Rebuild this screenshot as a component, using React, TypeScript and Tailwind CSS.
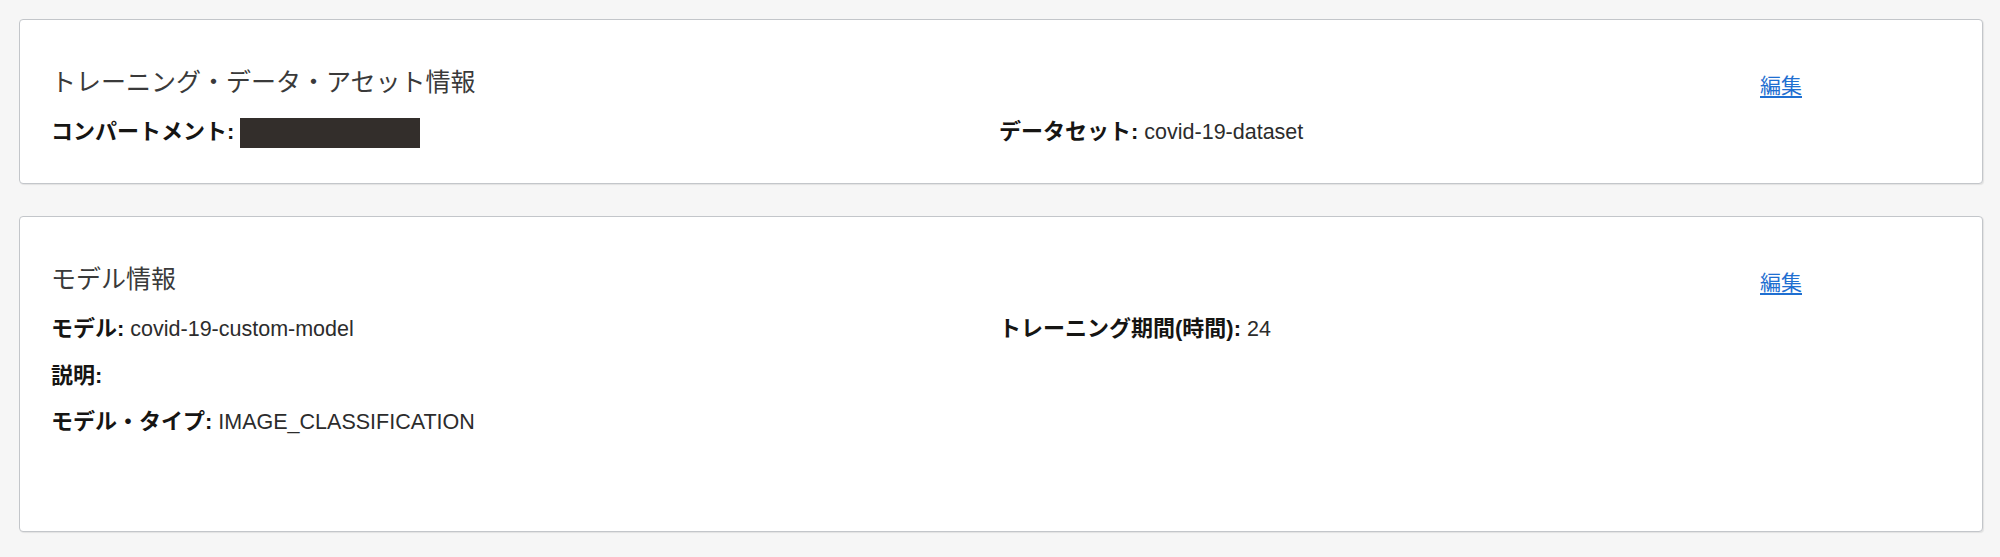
import React from "react";

const FONT = { fontFamily: '"Liberation Sans", "Noto Sans CJK JP", sans-serif' };

function Row({ label, children }: { label: string; children?: React.ReactNode }) {
  return (
    <div className="h-[30px] leading-[30px] whitespace-nowrap">
      <span className="font-bold text-[22px] text-[#161513]">{label}:</span>
      {children ? <span className="text-[21.5px] text-[#2c2c2c]"> {children}</span> : null}
    </div>
  );
}

function EditLink() {
  return (
    <a
      href="#"
      className="block pt-[8px] leading-[22px] text-[21px] text-[#1f6fd1] underline underline-offset-[3px] whitespace-nowrap"
    >
      編集
    </a>
  );
}

export default function App() {
  return (
    <div className="min-h-screen bg-[#f6f6f6] pt-[19px] pb-[24px]" style={FONT}>
      <div className="ml-[19px] mr-[17px] flex flex-col gap-[32px]">
        {/* Card 1 */}
        <div className="bg-white border border-[#c3c6ca] rounded-[4px] shadow-[1px_1px_1px_rgba(0,0,0,0.08)] pl-[31px] pt-[47px] pb-[36px]">
          <div className="grid grid-cols-[948px_761px_auto]">
            <div className="col-span-2 h-[30px] leading-[30px] text-[25px] text-[#3a3a3a] whitespace-nowrap mb-[20px]">
              トレーニング・データ・アセット情報
            </div>
            <EditLink />
            <div className="flex items-center h-[30px] whitespace-nowrap">
              <span className="font-bold text-[22px] text-[#161513] leading-[30px]">コンパートメント:</span>
              <span className="inline-block ml-[6px] w-[180px] h-[30px] bg-[#332e2b] translate-y-[1px]" />
            </div>
            <Row label="データセット">covid-19-dataset</Row>
          </div>
        </div>

        {/* Card 2 */}
        <div className="bg-white border border-[#c3c6ca] rounded-[4px] shadow-[1px_1px_1px_rgba(0,0,0,0.08)] pl-[31px] pt-[47px] pb-[94px]">
          <div className="grid grid-cols-[948px_761px_auto]">
            <div className="col-span-2 h-[30px] leading-[30px] text-[25px] text-[#3a3a3a] whitespace-nowrap mb-[20px]">
              モデル情報
            </div>
            <EditLink />
            <div className="flex flex-col gap-[16.5px]">
              <Row label="モデル">covid-19-custom-model</Row>
              <Row label="説明" />
              <Row label="モデル・タイプ">IMAGE_CLASSIFICATION</Row>
            </div>
            <div className="flex flex-col">
              <Row label="トレーニング期間(時間)">24</Row>
            </div>
          </div>
        </div>
      </div>
    </div>
  );
}
